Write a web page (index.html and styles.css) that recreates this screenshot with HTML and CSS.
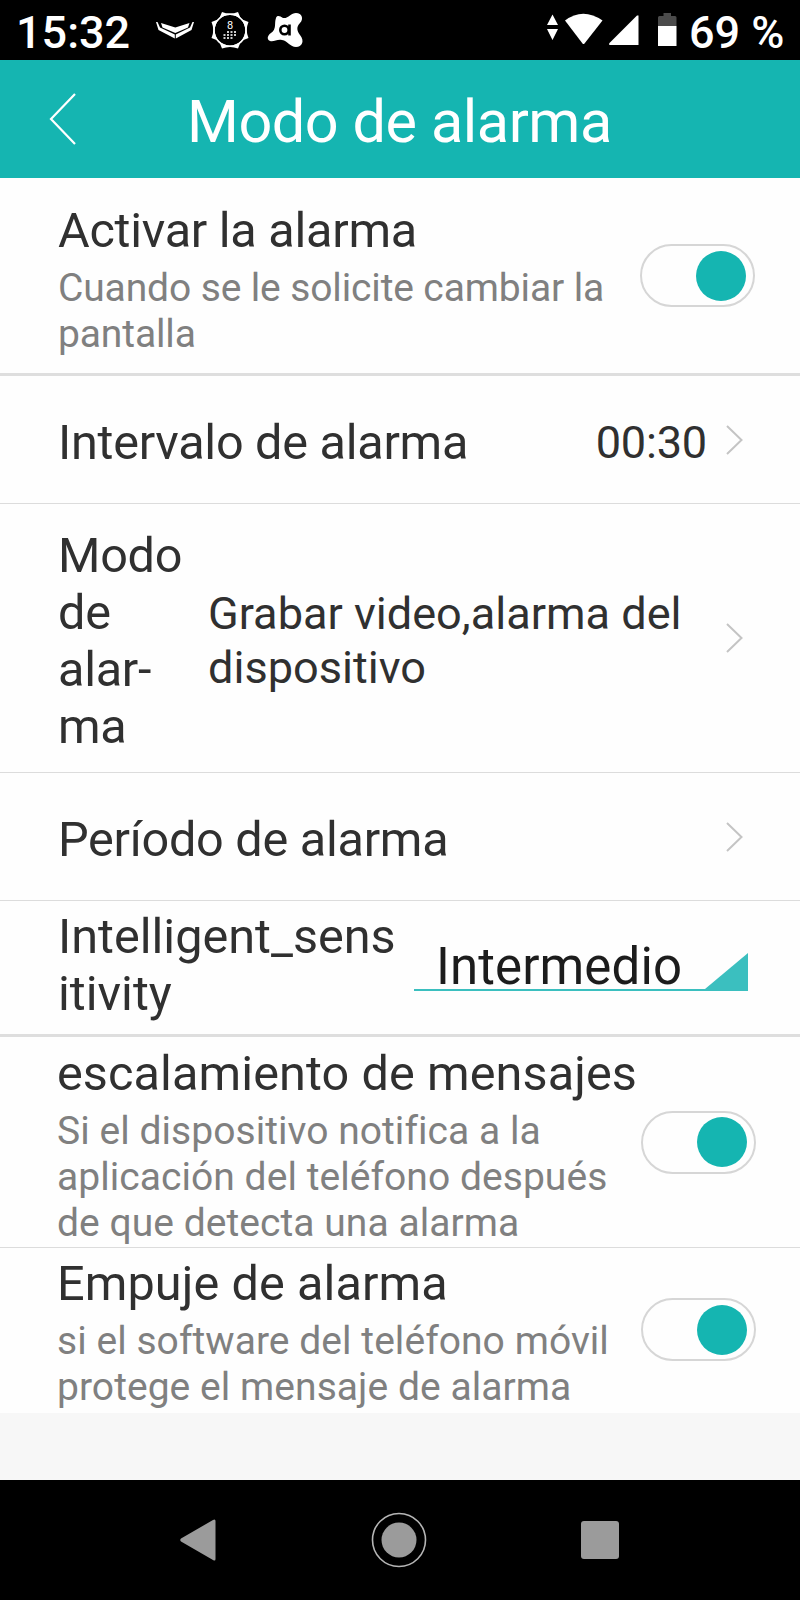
FILE: index.html
```html
<!DOCTYPE html>
<html lang="es">
<head>
    <meta charset="UTF-8">
    <meta name="viewport" content="width=device-width, initial-scale=1.0">
    <title>Modo de alarma</title>
    <link rel="stylesheet" href="styles.css">
</head>
<body>
    <div class="screen">
        <div class="status-bar">
            <span class="clock">15:32</span>
            <svg class="notifications" width="160" height="60" viewBox="0 0 160 60" fill="#fff">
                <!-- wings -->
                <path d="M5 22 L6.500 22 L9 27.500 L23.800 34.500 L23.800 38.500 L7.500 30 Z"/>
                <path d="M43 22 L41.500 22 L39 27.500 L24.800 34.500 L24.800 38.500 L40.500 30 Z"/>
                <path d="M10 23 L24.300 27.500 L38.500 23 L37 27.500 L24.300 33 L11.500 27.500 Z"/>
                <!-- badge -->
                <path fill-rule="evenodd" d="M71 12 Q79 15 87 12 L90 19 L97.500 22 Q94 30 97.500 38 L90 41 L87 48.500 Q79 45.500 71 48.500 L68 41 L60.500 38 Q64 30 60.500 22 L68 19 Z M79 15 A15.300 15.300 0 1 0 79 45.600 A15.300 15.300 0 1 0 79 15 Z"/>
                <path d="M71 12 L87 12 L97.500 22 L97.500 38 L87 48.500 L71 48.500 L60.500 38 L60.500 22 Z" fill="none"/>
                <circle cx="79" cy="30.300" r="16" fill="none" stroke="#fff" stroke-width="1.500"/>
                <text class="badge-digit" x="79" y="28.500" text-anchor="middle">8</text>
                <path d="M76 32h2M79.500 32h2M83 32h2M72.500 35h2M76 35h2M79.500 35h2M83 35h2M72.500 38h2M76 38h2M79.500 38h2" stroke="#ccc" stroke-width="1.800"/>
                <!-- antivirus -->
                <path d="M125 18 C126 15 129 16 132 18 C137 19 140 13 145 13 C151 13 153 19 149 23 C145 27 146 31 149 35 C154 41 151 47 145 47 C139 47 137 41 131 40 C126 39 123 42 119 41 C115 39 117 35 120 33 C126 29 123 23 125 18 Z"/>
                <circle cx="133.500" cy="30" r="4.200" fill="none" stroke="#000" stroke-width="2.600"/>
                <path d="M138.500 24.500V35.500" stroke="#000" stroke-width="2.600"/>
            </svg>
            <svg class="system-icons" width="132" height="60" viewBox="0 0 132 60" fill="#fff">
                <path d="M5.500 14.500 L11 25 H0 Z M0 29 H11 L5.500 40 Z"/>
                <path d="M18 20.500 Q36 7 55.500 20.500 L37.500 43.500 Q36.500 44.500 35.500 43.500 Z"/>
                <path d="M91.500 15.500 V45 H62.500 Q61.500 44 62.500 43 L90 15.500 Z"/>
                <path fill="#4b4b4b" d="M111 26 V17.500 Q111 16 112.500 16 H116.500 V13 H124 V16 H128 Q129.500 16 129.500 17.500 V26 Z"/>
                <path d="M111 26 H129.500 V46 H111 Z"/>
            </svg>
            <span class="battery">69 %</span>
        </div>

        <div class="header">
            <svg class="back" width="28" height="52" viewBox="0 0 28 52">
                <path d="M26 1 L2 26 L26 51" fill="none" stroke="#fff" stroke-width="2.200"/>
            </svg>
            <h1 class="title">Modo de alarma</h1>
        </div>

        <div class="settings">
            <div class="row row-enable thick">
                <div class="info">
                    <div class="label">Activar la alarma</div>
                    <div class="desc">Cuando se le solicite cambiar la<br>pantalla</div>
                </div>
                <div class="toggle"><div class="thumb"></div></div>
            </div>

            <div class="row row-interval">
                <div class="label">Intervalo de alarma</div>
                <div class="value value-time">00:30</div>
                <svg class="chevron" width="17" height="30" viewBox="0 0 17 30"><path d="M1 1 L15.500 15 L1 29"/></svg>
            </div>

            <div class="row row-mode">
                <div class="label label-narrow">Modo<br>de<br>alar-<br>ma</div>
                <div class="value value-mode">Grabar video,alarma del<br>dispositivo</div>
                <svg class="chevron" width="17" height="30" viewBox="0 0 17 30"><path d="M1 1 L15.500 15 L1 29"/></svg>
            </div>

            <div class="row row-period">
                <div class="label">Período de alarma</div>
                <svg class="chevron" width="17" height="30" viewBox="0 0 17 30"><path d="M1 1 L15.500 15 L1 29"/></svg>
            </div>

            <div class="row row-sensitivity thick">
                <div class="label">Intelligent_sens<br>itivity</div>
                <div class="spinner">
                    <span class="spinner-text">Intermedio</span>
                    <svg class="spinner-corner" width="43" height="36" viewBox="0 0 43 36"><path d="M43 0 V36 H0 Z" fill="#3bbfbf"/></svg>
                </div>
            </div>

            <div class="row row-messages">
                <div class="info">
                    <div class="label">escalamiento de mensajes</div>
                    <div class="desc">Si el dispositivo notifica a la<br>aplicación del teléfono después<br>de que detecta una alarma</div>
                </div>
                <div class="toggle"><div class="thumb"></div></div>
            </div>

            <div class="row row-push">
                <div class="info">
                    <div class="label">Empuje de alarma</div>
                    <div class="desc">si el software del teléfono móvil<br>protege el mensaje de alarma</div>
                </div>
                <div class="toggle"><div class="thumb"></div></div>
            </div>
        </div>

        <div class="nav-bar">
            <svg width="36" height="42" viewBox="0 0 36 42"><path d="M33 1 Q35.500 -0.500 35.500 2 V40 Q35.500 42.500 33 41 L1 22.500 Q-0.500 21 1 19.500 Z" fill="#9b9b9b"/></svg>
            <svg width="56" height="56" viewBox="0 0 56 56"><circle cx="28" cy="28" r="26.500" fill="none" stroke="#b5b5b5" stroke-width="1.600"/><circle cx="28" cy="28" r="17.500" fill="#9b9b9b"/></svg>
            <svg width="38" height="38" viewBox="0 0 38 38"><rect width="38" height="38" rx="3" fill="#9b9b9b"/></svg>
        </div>
    </div>
</body>
</html>
```
FILE: styles.css
```css
* {
    margin: 0;
    padding: 0;
    box-sizing: border-box;
}

body {
    font-family: Roboto, sans-serif;
    background: #f7f7f7;
    color: #303030;
}

svg {
    display: block;
    flex-shrink: 0;
}

.screen {
    width: 800px;
    height: 1600px;
    display: flex;
    flex-direction: column;
    overflow: hidden;
}

.status-bar {
    height: 60px;
    background: #000;
    color: #fff;
    display: flex;
    align-items: center;
    padding: 4px 16px 0 16px;
    font-size: 45px;
    font-weight: 500;
    white-space: nowrap;
}

.clock {
    width: 135px;
}

.notifications,
.system-icons {
    margin-top: -4px;
}

.badge-digit {
    font-size: 11px;
    font-weight: 400;
}

.system-icons {
    margin-left: auto;
}

.battery {
    width: 95px;
    margin-left: 10px;
}

.header {
    height: 118px;
    background: #15b5b1;
    color: #fff;
    display: flex;
    align-items: center;
    padding-left: 49px;
}

.title {
    margin-left: 110px;
    padding-top: 6px;
    font-size: 59.4px;
    font-weight: 400;
    line-height: 70px;
    letter-spacing: -0.45px;
    white-space: nowrap;
}

.settings {
    background: #fefefe;
}

.row {
    display: flex;
    align-items: center;
    padding: 0 44px 0 58px;
    border-bottom: 1px solid #dcdcdc;
}

.thick {
    border-bottom: 3px solid #dedede;
}

.row-enable {
    height: 198px;
    padding-right: 45px;
}

.row-interval {
    height: 128px;
}

.row-mode {
    height: 269px;
}

.row-period {
    height: 128px;
}

.row-sensitivity {
    height: 136px;
}

.row-messages {
    height: 211px;
    padding-left: 57px;
}

.row-push {
    height: 165px;
    padding-left: 57px;
    border-bottom: none;
}

.row-enable .info {
    padding-top: 8px;
}

.row-messages .info {
    padding-top: 6px;
}

.row-push .info {
    padding-top: 4px;
}

.label {
    font-size: 48.6px;
    line-height: 57px;
    white-space: nowrap;
}

.row-enable .label,
.row-interval .label,
.row-mode .label,
.row-period .label {
    letter-spacing: -0.27px;
}

.row-messages .label,
.row-push .label {
    letter-spacing: 0.1px;
}

.desc {
    margin-top: 6px;
    font-size: 39px;
    line-height: 46px;
    color: #808080;
    letter-spacing: 0.05px;
    white-space: nowrap;
}

.row-enable .desc {
    letter-spacing: -0.13px;
}

.value {
    font-size: 45.1px;
    line-height: 53.5px;
    white-space: nowrap;
}

.value-time {
    margin-left: auto;
    margin-right: 19px;
    padding-top: 6px;
    letter-spacing: -0.2px;
}

.row-interval .label,
.row-period .label {
    padding-top: 5px;
}

.label-narrow {
    width: 150px;
    padding-top: 6px;
}

.value-mode {
    padding-top: 5px;
}

.row-period .chevron,
.row-mode .chevron {
    margin-left: auto;
}

.row-sensitivity .label {
    padding-bottom: 5px;
}

.chevron {
    margin-right: 13px;
    fill: none;
    stroke: #c4c4c4;
    stroke-width: 2;
}

.toggle {
    width: 115px;
    height: 63px;
    margin-left: auto;
    flex-shrink: 0;
    border: 2px solid #d6d6d6;
    border-radius: 32px;
    display: flex;
    align-items: center;
    justify-content: flex-end;
    padding-right: 7px;
}

.row-push .toggle {
    margin-top: -2px;
}

.thumb {
    width: 50px;
    height: 50px;
    border-radius: 50%;
    background: #15b5b1;
}

.spinner {
    width: 334px;
    height: 53px;
    margin-top: -7px;
    margin-left: auto;
    margin-right: 8px;
    display: flex;
    align-items: flex-end;
    justify-content: space-between;
    border-bottom: 2px solid #3bbfbf;
    padding-left: 22px;
    color: #1c1c1c;
}

.spinner-text {
    font-size: 51px;
    line-height: 60px;
    letter-spacing: 0.1px;
    margin-bottom: -8px;
}

.nav-bar {
    height: 120px;
    margin-top: auto;
    flex-shrink: 0;
    background: #000;
    display: flex;
    align-items: center;
    justify-content: space-between;
    padding: 0 181px 0 180px;
}
```
